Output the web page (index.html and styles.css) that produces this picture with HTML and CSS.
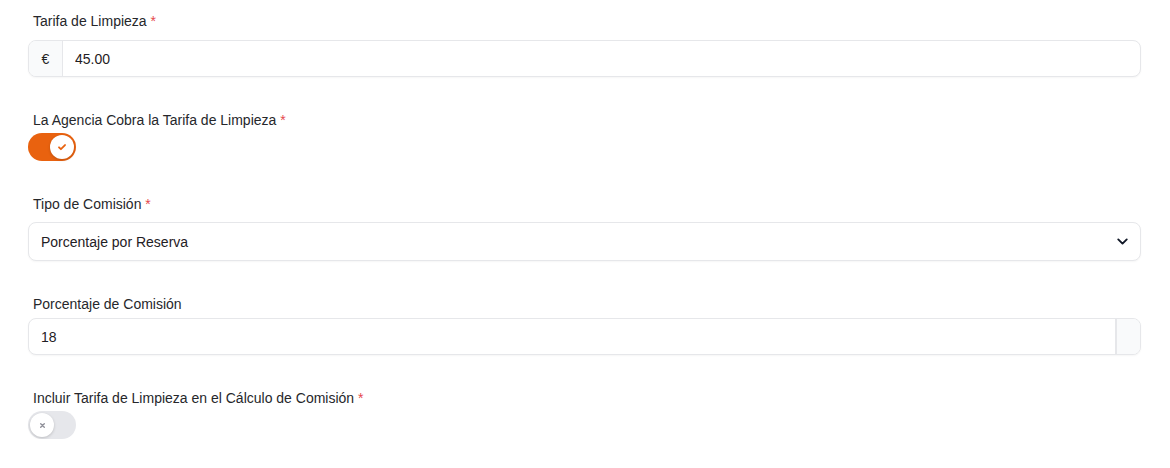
FILE: index.html
```html
<!DOCTYPE html>
<html lang="es">
<head>
<meta charset="utf-8">
<link rel="stylesheet" href="styles.css">
</head>
<body>
<form class="form">
  <div class="field">
    <label class="label">Tarifa de Limpieza <span class="req">*</span></label>
    <div class="input-wrap">
      <span class="prefix">€</span>
      <input class="input" type="text" value="45.00">
    </div>
  </div>

  <div class="field field-toggle">
    <label class="label">La Agencia Cobra la Tarifa de Limpieza <span class="req">*</span></label>
    <button type="button" class="toggle on">
      <span class="knob">
        <svg viewBox="0 0 20 20" width="12" height="12"><path d="M5 10.5l3.2 3.2 6.8-7" fill="none" stroke="currentColor" stroke-width="3" stroke-linecap="round" stroke-linejoin="round"/></svg>
      </span>
    </button>
  </div>

  <div class="field field-select">
    <label class="label">Tipo de Comisión <span class="req">*</span></label>
    <div class="input-wrap select-wrap">
      <span class="select-text">Porcentaje por Reserva</span>
      <svg class="chev" viewBox="0 0 20 20" width="17" height="17"><path d="M5 7.5l5 5 5-5" fill="none" stroke="currentColor" stroke-width="2.2" stroke-linecap="round" stroke-linejoin="round"/></svg>
    </div>
  </div>

  <div class="field field-tight">
    <label class="label">Porcentaje de Comisión</label>
    <div class="input-wrap">
      <input class="input" type="text" value="18">
      <span class="suffix"></span>
    </div>
  </div>

  <div class="field field-toggle">
    <label class="label">Incluir Tarifa de Limpieza en el Cálculo de Comisión <span class="req">*</span></label>
    <button type="button" class="toggle off">
      <span class="knob">
        <svg viewBox="0 0 20 20" width="9" height="9"><path d="M6 6l8 8M14 6l-8 8" fill="none" stroke="currentColor" stroke-width="3" stroke-linecap="round"/></svg>
      </span>
    </button>
  </div>
</form>
</body>
</html>
```

FILE: styles.css
```css
* { box-sizing: border-box; }
html, body { margin: 0; padding: 0; background: #ffffff; }
body {
  font-family: "Liberation Sans", Arial, Helvetica, sans-serif;
  font-size: 14px;
  color: #1f2024;
}
.form {
  width: 1113px;
  margin-left: 28px;
  padding-top: 11px;
  display: flex;
  flex-direction: column;
  gap: 33px;
}
.field {
  display: flex;
  flex-direction: column;
  gap: 9px;
}
.field-toggle { gap: 3px; }
.field-select { gap: 8px; }
.field-tight { gap: 4px; }
.label {
  display: block;
  line-height: 20px;
  padding-left: 5px;
  color: #26272b;
}
.req { color: #e5484d; }
.input-wrap {
  display: flex;
  align-items: center;
  height: 37px;
  border: 1px solid #e6e7ea;
  border-radius: 8px;
  background: #fff;
  box-shadow: 0 1px 2px rgba(0,0,0,0.04);
  overflow: hidden;
}
.select-wrap { height: 39px; }
.prefix {
  width: 34px;
  height: 100%;
  display: flex;
  align-items: center;
  justify-content: center;
  background: #f9fafb;
  border-right: 1px solid #e6e7ea;
  color: #222;
  font-size: 14px;
}
.input {
  flex: 1;
  height: 100%;
  border: 0;
  outline: 0;
  padding: 0 12px;
  font: inherit;
  color: #1f2024;
  background: transparent;
}
.suffix {
  width: 25px;
  height: 100%;
  background: #f9fafb;
  border-left: 2px solid #e6e7ea;
}
.select-text {
  flex: 1;
  padding-left: 12px;
  color: #1f2024;
}
.chev {
  color: #111827;
  margin-right: 9px;
}
.toggle {
  position: relative;
  width: 48px;
  height: 28px;
  border: 0;
  border-radius: 14px;
  padding: 0;
  cursor: pointer;
}
.toggle.on { background: #e9620f; }
.toggle.off { background: #e6e7eb; }
.knob {
  position: absolute;
  top: 2px;
  width: 24px;
  height: 24px;
  border-radius: 50%;
  background: #fff;
  display: flex;
  align-items: center;
  justify-content: center;
  box-shadow: 0 1px 3px rgba(0,0,0,0.18);
}
.toggle.on .knob { left: 22px; color: #e9620f; }
.toggle.off .knob { left: 2px; color: #8e8f98; }
```
